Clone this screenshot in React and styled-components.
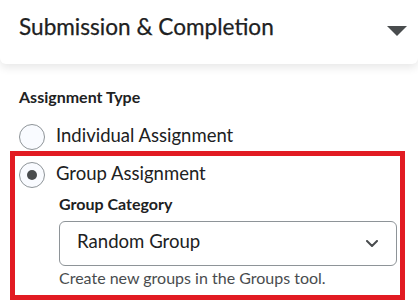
import React from "react";
import styled, { createGlobalStyle } from "styled-components";

const Global = createGlobalStyle`
  html, body { margin: 0; padding: 0; background: #ffffff; }
  body { font-family: Lato, "Noto Sans", sans-serif; color: #202122; }
  * { box-sizing: border-box; }
`;

const Page = styled.div`
  width: 418px;
  height: 302px;
  overflow: hidden;
  background: #ffffff;
`;

const Header = styled.div`
  height: 64px;
  display: flex;
  justify-content: space-between;
  align-items: flex-start;
  padding: 13px 11px 0 19px;
  background: #ffffff;
  border-radius: 0 0 6px 6px;
  box-shadow: 0 4px 8px rgba(0, 0, 0, 0.09);
  position: relative;
`;

const Title = styled.h2`
  margin: 0;
  font-size: 22.6px;
  line-height: 1.2;
  font-weight: 400;
  color: #202122;
  -webkit-text-stroke: 0.25px #202122;
`;

const Caret = styled.svg`
  width: 20px;
  height: 10px;
  margin-top: 13px;
  display: block;
`;

const Body = styled.div`
  padding: 23px 13px 0 19px;
`;

const FieldLabel = styled.div`
  font-size: 16px;
  font-weight: 700;
  line-height: 19px;
  color: #202122;
`;

const RadioRow = styled.label`
  display: flex;
  align-items: flex-start;
  gap: 11px;
  margin-top: ${(p) => p.$mt || 0}px;
`;

const RadioCircle = styled.span`
  width: 26px;
  height: 26px;
  flex: none;
  border-radius: 50%;
  border: 1.5px solid #8e9498;
  background: #f9fbff;
  display: flex;
  align-items: center;
  justify-content: center;
  &::after {
    content: "";
    display: ${(p) => (p.$checked ? "block" : "none")};
    width: 10px;
    height: 10px;
    border-radius: 50%;
    background: #494c4e;
  }
`;

const RadioText = styled.span`
  font-size: 18.5px;
  line-height: 22px;
  color: #202122;
`;

const Highlight = styled.div`
  margin: 1px 0 0 -9px;
  border: 5px solid #e21b22;
  padding: 6px 3px 8px 4px;
`;

const SubGroup = styled.div`
  padding-left: 40px;
  margin-top: 6px;
`;

const Select = styled.div`
  margin-top: 8px;
  height: 45px;
  border: 1px solid #8e9498;
  border-radius: 6px;
  background: #ffffff;
  display: flex;
  align-items: center;
  justify-content: space-between;
  padding: 0 18px 0 17px;
`;

const SelectValue = styled.span`
  font-size: 18.6px;
  line-height: 22px;
  padding-bottom: 6px;
  color: #202122;
`;

const Chevron = styled.svg`
  width: 12px;
  height: 7px;
  display: block;
`;

const Helper = styled.div`
  margin-top: 2px;
  font-size: 16px;
  line-height: 19px;
  color: #494c4e;
`;

function Radio({ checked, label, mt }) {
  return (
    <RadioRow $mt={mt}>
      <RadioCircle $checked={checked} />
      <RadioText>{label}</RadioText>
    </RadioRow>
  );
}

export default function App() {
  return (
    <Page>
      <Global />
      <Header>
        <Title>Submission &amp; Completion</Title>
        <Caret viewBox="0 0 20 10">
          <path d="M0 0 L20 0 L10 10 Z" fill="#494c4e" />
        </Caret>
      </Header>
      <Body>
        <FieldLabel>Assignment Type</FieldLabel>
        <Radio label="Individual Assignment" mt={18} />
        <Highlight>
          <Radio checked label="Group Assignment" />
          <SubGroup>
            <FieldLabel>Group Category</FieldLabel>
            <Select>
              <SelectValue>Random Group</SelectValue>
              <Chevron viewBox="0 0 12 7">
                <path
                  d="M1 1 L6 6 L11 1"
                  fill="none"
                  stroke="#494c4e"
                  strokeWidth="2"
                  strokeLinecap="round"
                  strokeLinejoin="round"
                />
              </Chevron>
            </Select>
            <Helper>Create new groups in the Groups tool.</Helper>
          </SubGroup>
        </Highlight>
      </Body>
    </Page>
  );
}
